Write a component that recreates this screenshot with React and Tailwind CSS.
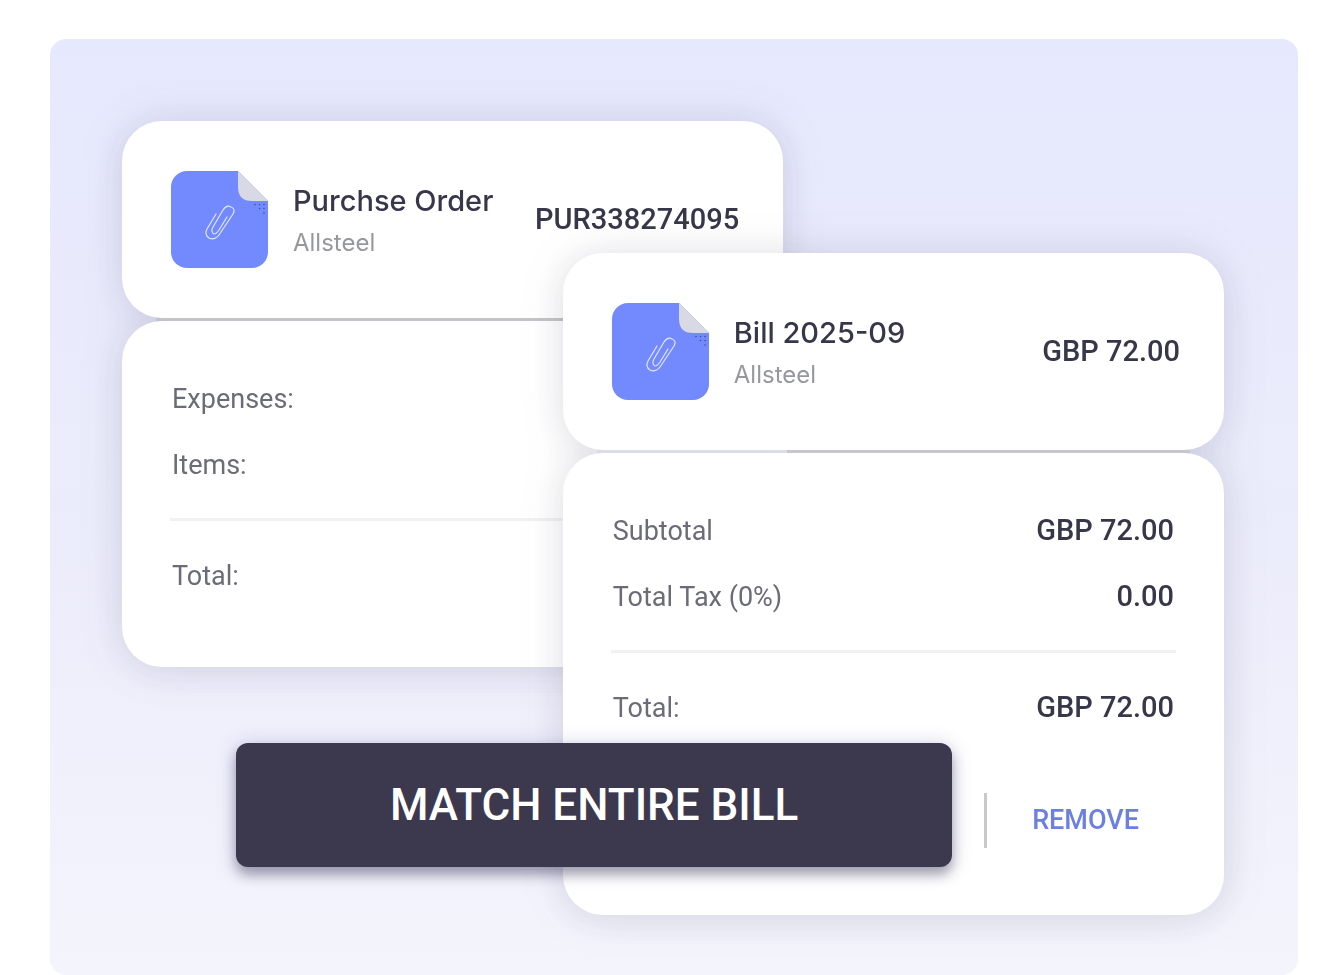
import clsx from "clsx";

const purchaseOrder = {
    title: "Purchse Order",
    vendor: "Allsteel",
    reference: "PUR338274095",
    lines: [
        { label: "Expenses:", value: "" },
        { label: "Items:", value: "" },
    ],
    total: "",
};

const bill = {
    title: "Bill 2025-09",
    vendor: "Allsteel",
    reference: "GBP 72.00",
    lines: [
        { label: "Subtotal", value: "GBP 72.00" },
        { label: "Total Tax (0%)", value: "0.00" },
    ],
    total: "GBP 72.00",
};

const FileIcon = () => (
    <svg className="size-[97px] shrink-0" viewBox="0 0 97 97" fill="none" aria-hidden="true">
        <path d="M16 0H67L97 30V81A16 16 0 0 1 81 97H16A16 16 0 0 1 0 81V16A16 16 0 0 1 16 0Z" fill="#738aff" />
        <path d="M67 0V16Q67 30 81 30H97Z" fill="#d8d9e4" />
        <path
            d="M45 43L36 58C34 62 35 65 38 67C42 69 46 67 48 64L62 43C64 39 63 37 60 36C57 34 54 36 52 39L42 56C40 59 41 62 43 63C45 63 46 62 48 59L56 46"
            stroke="#dfe5ff"
            strokeWidth="1.2"
            strokeLinecap="round"
            strokeLinejoin="round"
        />
        <g fill="#3d4d9e">
            <circle cx="84" cy="33.500" r="0.800" />
            <circle cx="88.500" cy="33.500" r="0.800" />
            <circle cx="93" cy="33.500" r="0.800" />
            <circle cx="88.500" cy="37.500" r="0.800" />
            <circle cx="93" cy="37.500" r="0.800" />
            <circle cx="93" cy="42" r="0.800" />
        </g>
    </svg>
);

const AmountRow = ({ label, value }) => (
    <div className="flex h-[66px] items-center justify-between px-0.5">
        <dt className="text-[27px] text-[#6b6c77]">{label}</dt>
        <dd className="text-[29px] font-medium text-[#38374a]">{value}</dd>
    </div>
);

const DocumentCard = ({ doc, dividerClass, className, children }) => (
    <article
        className={clsx(
            "flex flex-col [filter:drop-shadow(0_0_22px_rgba(70,70,80,0.12))_drop-shadow(0_6px_16px_rgba(90,95,150,0.08))]",
            className
        )}
    >
        <header className="flex h-[197px] items-center rounded-[40px] bg-white pr-[44px] pl-[49px]">
            <FileIcon />
            <div className="ml-[25px] pt-1">
                <h2 className="font-['Inter',sans-serif] text-[29px] leading-[42px] font-medium whitespace-nowrap text-[#38374a]">
                    {doc.title}
                </h2>
                <p className="font-['Inter',sans-serif] text-[24px] leading-[42px] text-[#97989f]">{doc.vendor}</p>
            </div>
            <p className="ml-auto text-[29px] font-medium text-[#38374a]">{doc.reference}</p>
        </header>

        <div className={clsx("mx-[34px] h-[3px]", dividerClass)} />

        <div className="grow rounded-[40px] bg-white px-12 pt-[45px] pb-[58px]">
            <dl>
                {doc.lines.map((line) => (
                    <AmountRow key={line.label} label={line.label} value={line.value} />
                ))}
                <div className="mt-5 mb-[22px] h-[3px] bg-[#f1f1f4]" />
                <AmountRow label="Total:" value={doc.total} />
            </dl>
            {children}
        </div>
    </article>
);

const App = () => {
    return (
        <div className="bg-white pt-[39px] pr-[40px] pl-[50px] font-['Roboto',sans-serif]">
            <main className="rounded-2xl bg-linear-to-b from-[#e6e8fd] via-[#ebecfb] to-[#f4f4fc] pt-[82px] pr-[74px] pb-[60px] pl-[72px]">
                <div className="relative grid grid-cols-[2fr_1fr_2fr] items-start">
                    {/* The two documents share the middle column */}
                    <DocumentCard
                        doc={purchaseOrder}
                        dividerClass="bg-[#c3c3c9]"
                        className="col-span-2 col-start-1 row-start-1"
                    />
                    <DocumentCard
                        doc={bill}
                        dividerClass="bg-linear-to-r from-[#dcdce8] from-32% to-[#c6c6cc] to-32%"
                        className="col-span-2 col-start-2 row-start-1 mt-[132px]"
                    >
                        <div className="mt-[52px] mb-[9px] flex h-[55px] items-center justify-end gap-[45px] pr-[37px]">
                            <span className="h-full w-[3px] bg-[#c9c9cb]" />
                            <button type="button" className="text-[27px] font-medium text-[#6c80e0]">
                                REMOVE
                            </button>
                        </div>
                    </DocumentCard>

                    <button
                        type="button"
                        className="absolute bottom-12 left-[114px] h-[124px] w-[65%] rounded-xl bg-[#3c394e] text-[44px] font-medium text-white shadow-[0_8px_12px_rgba(40,38,60,0.35),0_2px_20px_rgba(70,70,150,0.25)]"
                    >
                        MATCH ENTIRE BILL
                    </button>
                </div>
            </main>
        </div>
    );
};

export default App;
